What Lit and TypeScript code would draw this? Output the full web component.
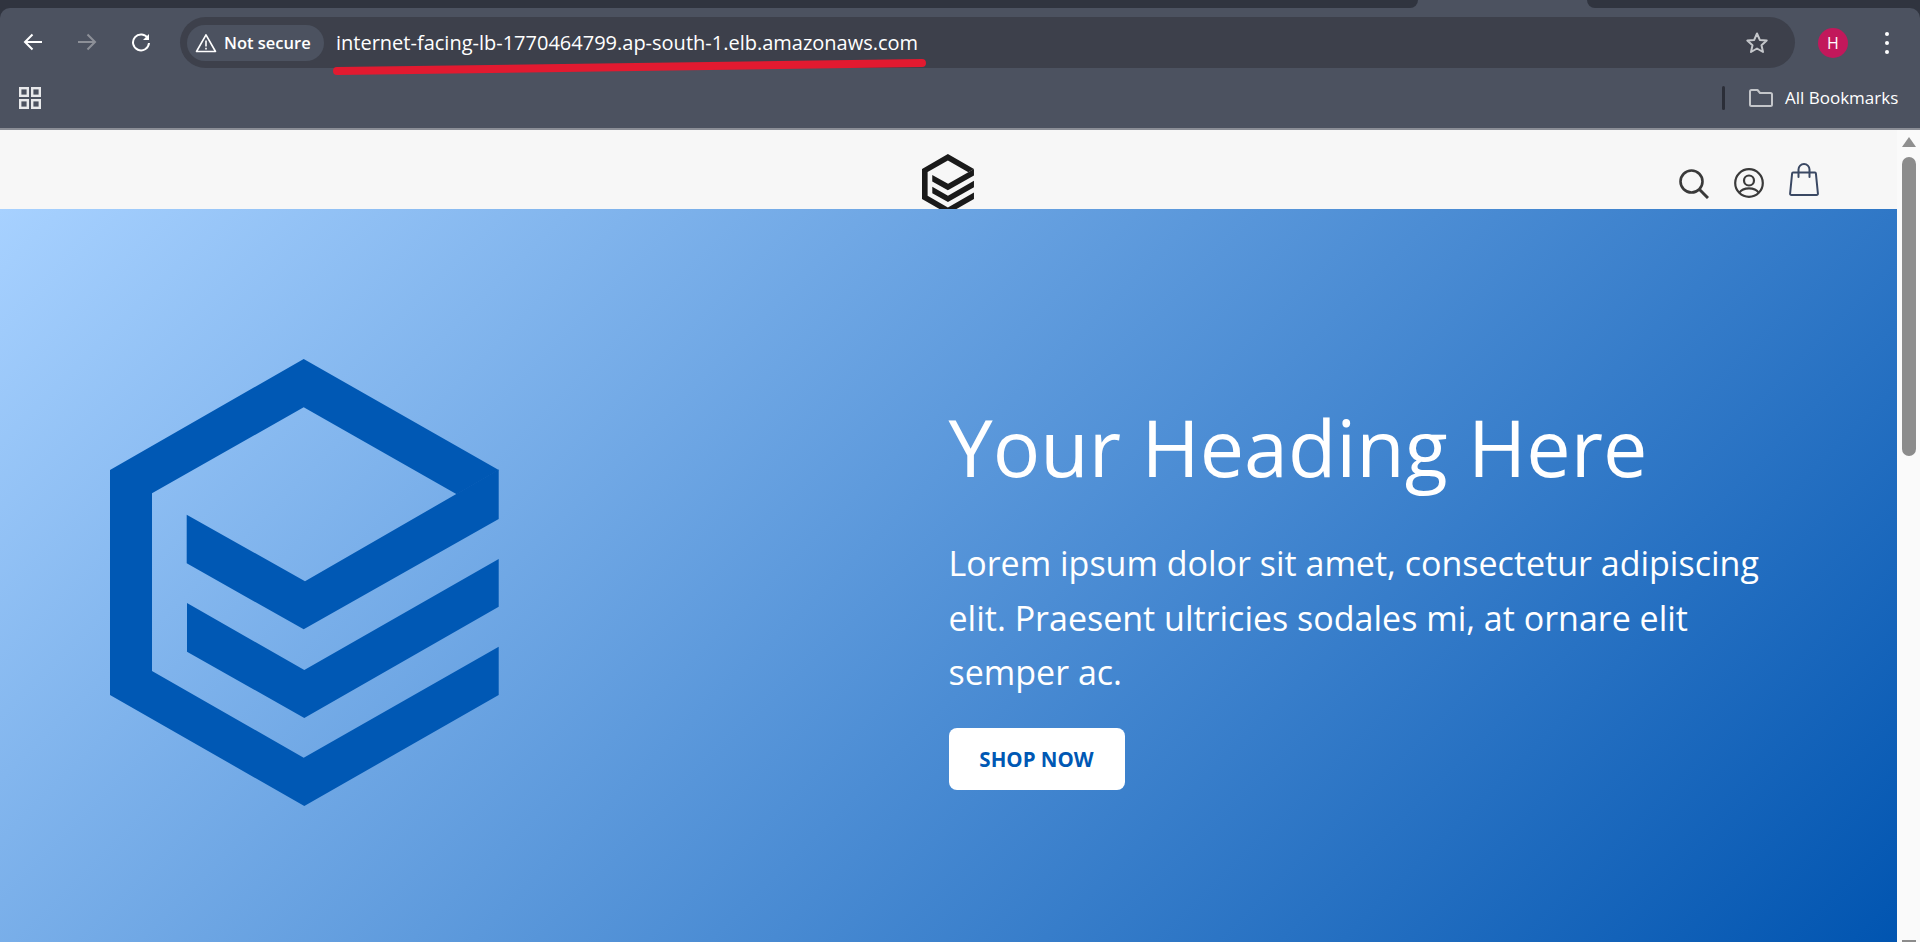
import { LitElement, html, css, svg } from 'lit';
import { customElement } from 'lit/decorators.js';

// the cube mark, same shapes in the header and the hero
const logoShapes = svg`
  <polygon points="193.700,0 388.700,111 346.700,135.300 193.700,48.300 42,134.300 42,312 193.700,398.700 388.700,287.700 388.700,336 194.300,447 0,336 0,111" />
  <polygon points="388.700,110.600 388.700,160 193.700,270.300 76.700,204.300 76.700,155.700 195,222.300 346.300,135" />
  <polygon points="77,244 194.300,311 388.700,200 388.700,247.700 194.300,359 77,292.700" />
`;

@customElement('browser-chrome')
export class BrowserChrome extends LitElement {
  static styles = css`
    :host {
      display: block;
      background: #30343f;
      font-family: 'Open Sans', 'Noto Sans', sans-serif;
      color: #fff;
    }
    .strip {
      display: flex;
      height: 8px;
      background: #4c5260;
    }
    .strip-left {
      width: 1418px;
      background: #30343f;
      border-bottom-right-radius: 8px;
    }
    .strip-gap {
      width: 169px;
    }
    .strip-right {
      flex: 1;
      background: #30343f;
      border-bottom-left-radius: 8px;
    }
    .toolbar {
      position: relative;
      height: 122px;
      box-sizing: border-box;
      background: #4c5260;
      border-bottom: 2px solid #8b8e96;
    }
    .strip + .toolbar {
      border-radius: 10px 10px 0 0;
    }
    .nav-row {
      display: flex;
      align-items: center;
      height: 51px;
      padding-top: 9px;
    }
    .nav-btn {
      display: flex;
      justify-content: center;
      width: 54px;
      flex: none;
    }
    .nav-btns {
      display: flex;
      margin-left: 6px;
      margin-right: 12px;
    }
    .omnibox {
      display: flex;
      align-items: center;
      width: 1615px;
      height: 51px;
      box-sizing: border-box;
      padding: 0 26px 0 7px;
      border-radius: 26px;
      background: #3d404b;
    }
    .chip {
      display: flex;
      align-items: center;
      gap: 7px;
      width: 137px;
      height: 36px;
      box-sizing: border-box;
      padding-left: 8px;
      border-radius: 18px;
      background: #4c5260;
      font-size: 16.500px;
      font-weight: 600;
      white-space: nowrap;
    }
    .url {
      flex: 1;
      margin-left: 12px;
      font-size: 20px;
      white-space: nowrap;
    }
    .avatar {
      display: flex;
      align-items: center;
      justify-content: center;
      width: 30px;
      height: 30px;
      margin-left: 23px;
      border-radius: 50%;
      background: #c2185b;
      font-size: 16px;
    }
    .kebab {
      display: flex;
      flex-direction: column;
      gap: 5px;
      margin-left: 37px;
    }
    .kebab i {
      width: 4px;
      height: 4px;
      border-radius: 50%;
      background: #fff;
    }
    .bookmarks {
      display: flex;
      align-items: center;
      height: 60px;
      padding-left: 19px;
    }
    .bookmarks .spacer {
      flex: 1;
    }
    .sep {
      width: 3px;
      height: 24px;
      border-radius: 2px;
      background: #2b2e38;
    }
    .folder {
      margin-left: 24px;
      margin-right: 12px;
    }
    .all {
      width: 135px;
      margin-bottom: 2px;
      font-size: 17px;
      white-space: nowrap;
    }
    .underline {
      position: absolute;
      left: 0;
      top: 0;
      pointer-events: none;
    }
  `;

  render() {
    return html`
      <div class="strip">
        <div class="strip-left"></div>
        <div class="strip-gap"></div>
        <div class="strip-right"></div>
      </div>
      <div class="toolbar">
        <div class="nav-row">
          <div class="nav-btns">
            <div class="nav-btn">
              <svg width="20" height="18" viewBox="0 0 20 18" fill="none" stroke="#fff" stroke-width="2">
                <path d="M19 9H2M9.500 1.500L2 9l7.500 7.500" />
              </svg>
            </div>
            <div class="nav-btn">
              <svg width="20" height="18" viewBox="0 0 20 18" fill="none" stroke="#8d9098" stroke-width="2">
                <path d="M1 9h17M10.500 1.500L18 9l-7.500 7.500" />
              </svg>
            </div>
            <div class="nav-btn">
              <svg width="20" height="20" viewBox="0 0 20 20" fill="none" stroke="#fff" stroke-width="2">
                <path d="M17 5.500A8 8 0 1 0 18 10" />
                <path d="M18 1v6h-6" fill="#fff" stroke="none" />
              </svg>
            </div>
          </div>
          <div class="omnibox">
            <div class="chip">
              <svg width="22" height="20" viewBox="0 0 22 20" fill="none" stroke="#fff" stroke-width="1.600">
                <path d="M11 1.800L1.500 18.500h19z" stroke-linejoin="round" />
                <path d="M11 7.500v6M11 14.700v1.800" />
              </svg>
              Not secure
            </div>
            <div class="url">internet-facing-lb-1770464799.ap-south-1.elb.amazonaws.com</div>
            <svg width="24" height="24" viewBox="0 0 24 24" fill="none" stroke="#c4c6ca" stroke-width="2">
              <path d="M12 2.500l2.800 6.400 6.900.7-5.200 4.600 1.500 6.800-6-3.500-6 3.500 1.500-6.800-5.200-4.600 6.900-.7z" stroke-linejoin="round" />
            </svg>
          </div>
          <div class="avatar">H</div>
          <div class="kebab"><i></i><i></i><i></i></div>
        </div>
        <div class="bookmarks">
          <svg width="22" height="22" viewBox="0 0 22 22" fill="none" stroke="#e8e9eb" stroke-width="2.400">
            <rect x="1.200" y="1.200" width="7.600" height="7.600" />
            <rect x="13.200" y="1.200" width="7.600" height="7.600" />
            <rect x="1.200" y="13.200" width="7.600" height="7.600" />
            <rect x="13.200" y="13.200" width="7.600" height="7.600" />
          </svg>
          <div class="spacer"></div>
          <div class="sep"></div>
          <svg class="folder" width="24" height="18" viewBox="0 0 24 18" fill="none" stroke="#c4c6ca" stroke-width="2">
            <path d="M1 2.500q0-1.500 1.500-1.500h6l2.500 3h10.500q1.500 0 1.500 1.500v10q0 1.500-1.500 1.500h-19q-1.500 0-1.500-1.500z" stroke-linejoin="round" />
          </svg>
          <div class="all">All Bookmarks</div>
        </div>
        <!-- red marker someone drew under the address -->
        <svg class="underline" width="1000" height="80" viewBox="0 0 1000 80" fill="none">
          <path d="M337 63L922 55" stroke="#e21a30" stroke-width="8" stroke-linecap="round" />
        </svg>
      </div>
    `;
  }
}

@customElement('app-root')
export class AppRoot extends LitElement {
  static styles = css`
    :host {
      display: flex;
      flex-direction: column;
      height: 942px;
      overflow: hidden;
      font-family: 'Open Sans', 'Noto Sans', sans-serif;
    }
    .viewport {
      flex: 1;
      display: flex;
      min-height: 0;
    }
    .page {
      flex: 1;
      min-width: 0;
    }
    .header {
      display: grid;
      grid-template-columns: 1fr auto 1fr;
      height: 79px;
      overflow: hidden;
      background: #f7f7f7;
    }
    .brand {
      grid-column: 2;
      width: 52px;
      height: 60px;
      margin: 24px 0 0 -2px;
      fill: #1a1a1a;
    }
    .icons {
      display: flex;
      justify-content: flex-end;
      align-items: flex-start;
      gap: 25px;
      padding: 39px 78px 0 0;
    }
    .user {
      margin-top: -1px;
    }
    .bag {
      margin-top: -6px;
    }
    .hero {
      display: grid;
      grid-template-columns: 1fr 1fr;
      align-items: center;
      height: 747px;
      background: linear-gradient(135deg, #a7d1ff 0%, #0054b0 100%);
    }
    .mark {
      display: block;
      width: 389px;
      height: 447px;
      margin-left: 110px;
      fill: #0058b4;
    }
    .copy {
      padding: 25px 130px 0 0;
      color: #fff;
    }
    h1 {
      margin: 0 0 42px;
      font-size: 79px;
      font-weight: 400;
      line-height: 94px;
    }
    p {
      margin: 0 0 28px;
      font-size: 34px;
      font-weight: 400;
      line-height: 54.500px;
    }
    .shop {
      display: inline-block;
      width: 176px;
      height: 62px;
      line-height: 62px;
      border-radius: 8px;
      background: #fff;
      color: #0058b4;
      font-size: 20.500px;
      font-weight: 700;
      text-align: center;
    }
    .scrollbar {
      display: flex;
      flex-direction: column;
      align-items: center;
      flex: none;
      width: 23px;
      background: #fafafa;
    }
    .arrow {
      width: 0;
      height: 0;
      margin-top: 7px;
      border-left: 7px solid transparent;
      border-right: 7px solid transparent;
      border-bottom: 10px solid #8f8f8f;
    }
    .thumb {
      width: 14px;
      height: 299px;
      margin-top: 10px;
      border-radius: 7px;
      background: #8c8c8c;
    }
    .arrow-tip {
      width: 14px;
      height: 2px;
      margin-top: auto;
      background: #8c8c8c;
    }
  `;

  render() {
    return html`
      <browser-chrome></browser-chrome>
      <div class="viewport">
        <div class="page">
          <header class="header">
            <svg class="brand" viewBox="0 0 389 447">${logoShapes}</svg>
            <div class="icons">
              <svg width="30" height="30" viewBox="0 0 30 30" fill="none" stroke="#3a3a3a" stroke-width="2.600">
                <circle cx="12.500" cy="12.500" r="11" />
                <path d="M20 20L29 29" stroke-width="3" />
              </svg>
              <svg class="user" width="30" height="30" viewBox="0 0 30 30" fill="none" stroke="#3a3a3a" stroke-width="2.200">
                <circle cx="15" cy="15" r="13.800" />
                <circle cx="15" cy="12.500" r="5" />
                <path d="M5.500 24.500c2-3.200 5.500-4.200 9.500-4.200s7.500 1 9.500 4.200" />
              </svg>
              <svg class="bag" width="30" height="34" viewBox="0 0 30 34" fill="none" stroke="#3a4863" stroke-width="2">
                <path d="M4 9.500h22q.8 0 .9 1l2 20q.1 1.500-1.400 1.500H2.500q-1.500 0-1.400-1.500l2-20q.1-1 .9-1z" stroke-linejoin="round" />
                <path d="M9.500 14V6.500a5.500 5.500 0 0 1 11 0V14" stroke-linecap="round" />
              </svg>
            </div>
          </header>
          <section class="hero">
            <div><svg class="mark" viewBox="0 0 389 447">${logoShapes}</svg></div>
            <div class="copy">
              <h1>Your Heading Here</h1>
              <p>Lorem ipsum dolor sit amet, consectetur adipiscing elit. Praesent ultricies sodales mi, at ornare elit semper ac.</p>
              <a class="shop">SHOP NOW</a>
            </div>
          </section>
        </div>
        <div class="scrollbar">
          <div class="arrow"></div>
          <div class="thumb"></div>
          <div class="arrow-tip"></div>
        </div>
      </div>
    `;
  }
}
